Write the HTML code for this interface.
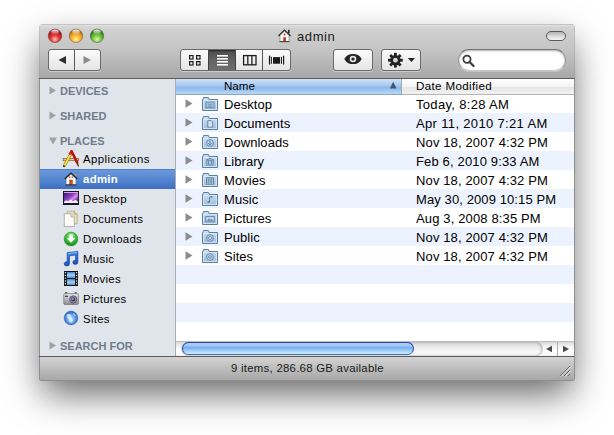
<!DOCTYPE html>
<html><head><meta charset="utf-8">
<style>
*{margin:0;padding:0;box-sizing:border-box}
html,body{width:614px;height:435px;overflow:hidden;background:#fff}
body{position:relative;font-family:"Liberation Sans",sans-serif;color:#000}
.a{position:absolute}
#win{position:absolute;left:39px;top:24px;width:536px;height:357px;border-radius:4px 4px 2px 2px;box-shadow:0 16px 36px -3px rgba(0,0,0,0.6);background:linear-gradient(#c4c4c4,#a2a2a2 54px,#909090 56px,#8e8e8e);overflow:hidden}
#tb{position:absolute;left:1px;top:0;width:534px;height:54px;background:linear-gradient(#dcdcdc,#d0d0d0 8%,#c5c5c5 45%,#a8a8a8);border-top:1px solid #c4c4c4;box-shadow:inset 0 1px 0 #e0e0e0}
#tbline{left:39px;top:78px;width:536px;height:1px;background:#5e5e5e}
.btn{position:absolute;border:1px solid #6a6a6a;border-radius:3px;background:linear-gradient(#fbfbfb,#f1f1f1 45%,#e5e5e5);box-shadow:0 1px 0 rgba(255,255,255,0.35)}
#side{left:40px;top:79px;width:135px;height:277px;background:#e0e5ec}
#vdiv{left:175px;top:79px;width:1px;height:277px;background:#acacac}
#list{left:176px;top:79px;width:398px;height:262px;background:#fff}
.hdr{font-size:11px;font-weight:bold;color:#717c89;letter-spacing:0}
.si{font-size:11.4px;letter-spacing:0.3px;color:#000}
.row{position:absolute;left:176px;width:398px;height:19px}
.alt{background:#edf3fe}
.nm{position:absolute;left:224px;font-size:13px;letter-spacing:0.05px}
.dt{position:absolute;left:416px;font-size:13px}
</style></head><body>
<div id="win">
  <div id="tb"></div>
</div>
<div class="a" id="tbline"></div>
<div class="a" id="side"></div>
<div class="a" id="vdiv"></div>
<div class="a" id="list"></div>
<svg width="0" height="0" style="position:absolute"><defs><linearGradient id="fg" x1="0" y1="0" x2="0" y2="1"><stop offset="0" stop-color="#cfe0f0"/><stop offset="1" stop-color="#a2bed8"/></linearGradient></defs></svg>
<!-- scrollbar -->
<div class="a" style="left:176px;top:341px;width:398px;height:15px;background:linear-gradient(#d8d8d8,#f2f2f2 30%,#ffffff 60%,#f4f4f4);border-top:1px solid #bdbdbd"></div>
<div class="a" style="left:181px;top:342px;width:362px;height:14px;border-radius:7px;background:linear-gradient(#cfcfcf,#ebebeb 35%,#f8f8f8 70%,#f0f0f0);box-shadow:inset -2px 0 2px rgba(0,0,0,0.18),inset 2px 0 2px rgba(0,0,0,0.15)"></div>
<div class="a" style="left:182px;top:342px;width:232px;height:13px;border-radius:7px;border:1px solid #2244c0;border-top-width:1.5px;border-bottom-color:#4a6a98;background:linear-gradient(#b0d0f4,#a2c6f2 25%,#7aaeec 42%,#92c4f6 62%,#b6e0fe 85%,#c6eaff)"></div>
<svg class="a" style="left:541px;top:342px" width="33" height="14" viewBox="0 0 33 14">
<path d="M5 7 L11 3.8 V10.2 Z" fill="#4a4a4a"/>
<line x1="16.5" y1="0" x2="16.5" y2="14" stroke="#b0b0b0" stroke-width="1"/>
<path d="M28 7 L22 3.8 V10.2 Z" fill="#4a4a4a"/>
</svg>
<!-- status bar -->
<div class="a" style="left:39px;top:356px;width:535px;height:1px;background:#5a5a5a"></div>
<div class="a" style="left:40px;top:357px;width:534px;height:23px;background:linear-gradient(#d4d4d4,#bdbdbd 50%,#a8a8a8)"></div>
<div class="a" style="left:231px;top:361px;font-size:11.4px;line-height:14px;letter-spacing:0.26px;color:#1a1a1a">9 items, 286.68 GB available</div>
<svg class="a" style="left:558px;top:364px" width="14" height="14" viewBox="0 0 14 14">
<g stroke="#6a6a6a" stroke-width="1"><line x1="2" y1="12" x2="12" y2="2"/><line x1="6" y1="12" x2="12" y2="6"/><line x1="10" y1="12" x2="12" y2="10"/></g>
<g stroke="#e8e8e8" stroke-width="1"><line x1="3" y1="12.5" x2="12.5" y2="3"/><line x1="7" y1="12.5" x2="12.5" y2="7"/></g>
</svg>

<!-- traffic lights -->
<svg class="a" style="left:46px;top:27px" width="60" height="18" viewBox="0 0 60 18">
<defs>
<radialGradient id="gr" cx="50%" cy="78%" r="62%"><stop offset="0" stop-color="#ffc0c0"/><stop offset="0.5" stop-color="#e83c3c"/><stop offset="0.85" stop-color="#c41e1e"/><stop offset="1" stop-color="#9c1414"/></radialGradient>
<radialGradient id="go" cx="50%" cy="78%" r="62%"><stop offset="0" stop-color="#fff4a0"/><stop offset="0.5" stop-color="#f8b838"/><stop offset="0.85" stop-color="#e49224"/><stop offset="1" stop-color="#b07014"/></radialGradient>
<radialGradient id="gg" cx="50%" cy="78%" r="62%"><stop offset="0" stop-color="#d8fcb0"/><stop offset="0.5" stop-color="#7cc848"/><stop offset="0.85" stop-color="#4a9c28"/><stop offset="1" stop-color="#2e7018"/></radialGradient>
<linearGradient id="hl" x1="0" y1="0" x2="0" y2="1"><stop offset="0" stop-color="#fff" stop-opacity="0.95"/><stop offset="1" stop-color="#fff" stop-opacity="0.05"/></linearGradient>
</defs>
<circle cx="9" cy="8.8" r="7.3" fill="#7a7a7a" opacity="0.3"/>
<circle cx="9" cy="8.8" r="6.6" fill="url(#gr)" stroke="#8a2222" stroke-width="0.6"/>
<ellipse cx="9" cy="5" rx="3.8" ry="2.5" fill="url(#hl)"/>
<circle cx="30" cy="8.8" r="7.3" fill="#7a7a7a" opacity="0.3"/>
<circle cx="30" cy="8.8" r="6.6" fill="url(#go)" stroke="#946020" stroke-width="0.6"/>
<ellipse cx="30" cy="5" rx="3.8" ry="2.5" fill="url(#hl)"/>
<circle cx="51" cy="8.8" r="7.3" fill="#7a7a7a" opacity="0.3"/>
<circle cx="51" cy="8.8" r="6.6" fill="url(#gg)" stroke="#3a7224" stroke-width="0.6"/>
<ellipse cx="51" cy="5" rx="3.8" ry="2.5" fill="url(#hl)"/>
</svg>
<!-- title -->
<svg class="a" style="left:277px;top:28px" width="15" height="15" viewBox="0 0 15 15">
<path d="M7.5 1.2 L1 7.6 L2 8.4 L7.5 3 L13 8.4 L14 7.6 Z" fill="#2a2a2a"/>
<rect x="11" y="1.8" width="1.6" height="3.5" fill="#2a2a2a"/>
<path d="M3 7.4 L7.5 3.2 L12 7.4 V13.6 H3 Z" fill="#fbfbf6" stroke="#666" stroke-width="0.5"/>
<rect x="6.3" y="9.2" width="2.6" height="4.4" fill="#c0361c"/>
<rect x="6.8" y="5.6" width="1.6" height="1.8" fill="#c0361c"/>
<rect x="2.5" y="13.2" width="10" height="0.9" fill="#333"/>
</svg>
<div class="a" style="left:297px;top:29px;font-size:13px;line-height:16px;letter-spacing:0.6px;color:#1a1a1a">admin</div>
<!-- pill -->
<div class="a" style="left:546px;top:31px;width:20px;height:10px;border-radius:5px;border:1px solid #5a5a5a;background:linear-gradient(#b4b4b4,#dcdcdc 55%,#f6f6f6)"></div>
<!-- back/forward -->
<div class="btn" style="left:48px;top:49px;width:53px;height:22px"></div>
<div class="a" style="left:74px;top:50px;width:1px;height:20px;background:#5a5a5a"></div>
<svg class="a" style="left:57px;top:55px" width="36" height="10" viewBox="0 0 36 10">
<path d="M1.5 5 L9 1 V9 Z" fill="#2e2e2e"/>
<path d="M34 5 L26.5 1 V9 Z" fill="#8c8c8c"/>
</svg>
<!-- segmented -->
<div class="btn" style="left:180px;top:49px;width:111px;height:22px"></div>
<div class="a" style="left:208px;top:50px;width:28px;height:20px;background:linear-gradient(#4e4e4e,#626262 50%,#6e6e6e);box-shadow:inset 0 1px 2px rgba(0,0,0,0.55)"></div>
<div class="a" style="left:208px;top:50px;width:1px;height:20px;background:#444"></div>
<div class="a" style="left:235px;top:50px;width:1px;height:20px;background:#444"></div>
<div class="a" style="left:262px;top:50px;width:1px;height:20px;background:#555"></div>
<svg class="a" style="left:187px;top:53px" width="100" height="14" viewBox="0 0 100 14">
<g fill="none" stroke="#1e1e1e" stroke-width="1.2">
<rect x="2.6" y="2.6" width="3.4" height="3.4"/><rect x="9.6" y="2.6" width="3.4" height="3.4"/>
<rect x="2.6" y="8.6" width="3.4" height="3.4"/><rect x="9.6" y="8.6" width="3.4" height="3.4"/>
</g>
<g fill="#fff"><rect x="30" y="2" width="11" height="1.6"/><rect x="30" y="5" width="11" height="1.6"/><rect x="30" y="8" width="11" height="1.6"/><rect x="30" y="11" width="11" height="1.6"/></g>
<g fill="none" stroke="#1e1e1e" stroke-width="1.3">
<rect x="56.6" y="2.6" width="12.4" height="9.2"/><line x1="60.8" y1="2.6" x2="60.8" y2="11.8"/><line x1="64.9" y1="2.6" x2="64.9" y2="11.8"/>
</g>
<g fill="#1a1a1a">
<rect x="86" y="4.1" width="7.1" height="6.6"/>
<rect x="81.9" y="2.7" width="1.3" height="8.8"/><rect x="84" y="3.8" width="0.9" height="6.9"/>
<rect x="94" y="3.8" width="1" height="6.9"/><rect x="96" y="2.7" width="1.2" height="8.8"/>
</g>
</svg>
<!-- quick look -->
<div class="btn" style="left:333px;top:49px;width:40px;height:22px"></div>
<svg class="a" style="left:342.4px;top:51.9px" width="22" height="14" viewBox="0 0 22 14">
<path d="M2.3 7 C5 2.4 8 1.9 11 1.9 C14 1.9 17 2.4 19.7 7 C17 11.6 14 12.1 11 12.1 C8 12.1 5 11.6 2.3 7 Z" fill="#242424"/>
<circle cx="11" cy="7" r="3.3" fill="#e4e4e4"/>
<circle cx="11" cy="7" r="1.6" fill="#242424"/>
</svg>
<!-- action -->
<div class="btn" style="left:381px;top:49px;width:40px;height:22px"></div>
<svg class="a" style="left:386px;top:52px" width="32" height="16" viewBox="0 0 32 16">
<g fill="#222">
<circle cx="9.4" cy="8.2" r="5.2"/>
<g>
<rect x="8" y="0.8" width="2.8" height="14.8"/>
<rect x="8" y="0.8" width="2.8" height="14.8" transform="rotate(45 9.4 8.2)"/>
<rect x="8" y="0.8" width="2.8" height="14.8" transform="rotate(90 9.4 8.2)"/>
<rect x="8" y="0.8" width="2.8" height="14.8" transform="rotate(135 9.4 8.2)"/>
</g>
</g>
<circle cx="9.4" cy="8.2" r="2.4" fill="#d4d4d4"/>
<path d="M21.8 6 H29 L25.4 10 Z" fill="#222"/>
</svg>
<!-- search -->
<div class="a" style="left:458px;top:49px;width:108px;height:22px;border-radius:11px;background:#fff;border:1px solid #979797;border-top-color:#727272;border-bottom-color:#c8c8c8;box-shadow:inset 0 1px 2px rgba(0,0,0,0.3),0 1px 0 rgba(255,255,255,0.25)"></div>
<svg class="a" style="left:461px;top:53px" width="16" height="15" viewBox="0 0 16 15">
<circle cx="6" cy="6.3" r="3.6" fill="none" stroke="#3a3a3a" stroke-width="1.8"/>
<line x1="8.6" y1="9" x2="12.6" y2="13" stroke="#3a3a3a" stroke-width="2.2" stroke-linecap="round"/>
</svg>

<!-- sidebar headers -->
<svg class="a" style="left:48px;top:85px" width="10" height="265" viewBox="0 0 10 265">
<g fill="#9aa2ad">
<path d="M1.5 1.5 L8 5.5 L1.5 9.5 Z"/>
<path d="M1.5 26.5 L8 30.5 L1.5 34.5 Z"/>
<path d="M1 52.5 H9 L5 59.5 Z"/>
<path d="M1.5 256.5 L8 260.5 L1.5 264.5 Z"/>
</g>
</svg>
<div class="a hdr" style="left:60px;top:85px">DEVICES</div>
<div class="a hdr" style="left:60px;top:110px">SHARED</div>
<div class="a hdr" style="left:60px;top:135px">PLACES</div>
<div class="a hdr" style="left:60px;top:340px">SEARCH FOR</div>
<!-- selection -->
<div class="a" style="left:40px;top:169px;width:135px;height:20px;background:linear-gradient(#6b98dc,#5486d0 50%,#3d6ec2);border-top:1px solid #4a7ed4"></div>
<!-- items -->
<div class="a si" style="left:83px;top:153px;letter-spacing:0.45px">Applications</div>
<div class="a si" style="left:83px;top:173px;color:#fff;font-weight:bold">admin</div>
<div class="a si" style="left:83px;top:193px">Desktop</div>
<div class="a si" style="left:83px;top:213px">Documents</div>
<div class="a si" style="left:83px;top:233px">Downloads</div>
<div class="a si" style="left:83px;top:253px">Music</div>
<div class="a si" style="left:83px;top:273px">Movies</div>
<div class="a si" style="left:83px;top:293px">Pictures</div>
<div class="a si" style="left:83px;top:313px">Sites</div>
<!-- icons -->
<svg class="a" style="left:62px;top:150px" width="18" height="18" viewBox="0 0 18 18">
<rect x="1.2" y="8.5" width="15.4" height="2.2" fill="#e6c58e" stroke="#8c5a2c" stroke-width="0.7"/>
<path d="M8.4 4.6 L2.4 15.6" stroke="#7a6a10" stroke-width="2.9" stroke-linecap="round"/>
<path d="M8.4 4.6 L2.6 15.2" stroke="#f4e038" stroke-width="2" stroke-linecap="round"/>
<path d="M8.1 3.6 L9.2 1.9" stroke="#e02828" stroke-width="2.8" stroke-linecap="round"/>
<path d="M2.3 15.4 L1.6 16.8" stroke="#3a2a10" stroke-width="1.6"/>
<path d="M9.6 1.2 L15.2 12.6" stroke="#b81414" stroke-width="2.6" stroke-linecap="round"/>
<path d="M14.8 12 L16.6 16.4" stroke="#7a2a18" stroke-width="1.4"/>
</svg>
<svg class="a" style="left:63px;top:171px" width="17" height="16" viewBox="0 0 17 16">
<rect x="12.2" y="1.2" width="1.6" height="4" fill="#cfcfcf" stroke="#555" stroke-width="0.4"/>
<path d="M3.4 7.6 L8 3.2 L12.6 7.6 V13.6 H3.4 Z" fill="#fbfaf0"/>
<path d="M8 1.2 L1.2 7.6 L2.1 8.5 L8 2.9 L13.9 8.5 L14.8 7.6 Z" fill="#2a2a2a"/>
<rect x="6.2" y="5.4" width="1.1" height="1.6" fill="#c83a1a"/><rect x="8.7" y="5.4" width="1.1" height="1.6" fill="#c83a1a"/>
<rect x="6.6" y="9" width="2.8" height="4.6" fill="#e04a10" stroke="#7a2a10" stroke-width="0.4"/>
<rect x="2.6" y="13.4" width="10.8" height="1.1" fill="#2a2a2a"/>
</svg>
<svg class="a" style="left:63px;top:191px" width="16" height="14" viewBox="0 0 16 14">
<defs><linearGradient id="dsk" x1="0" y1="0" x2="1" y2="1"><stop offset="0" stop-color="#2c1470"/><stop offset="0.45" stop-color="#9a48c8"/><stop offset="0.6" stop-color="#e090e8"/><stop offset="0.75" stop-color="#8a40b8"/><stop offset="1" stop-color="#301470"/></linearGradient></defs>
<rect x="0" y="0" width="16" height="14" fill="#1e1430"/>
<rect x="1" y="1" width="14" height="12" fill="url(#dsk)"/>
<rect x="1" y="1" width="14" height="1" fill="#d8a8e0"/>
<path d="M1 11 L3.2 9.2 L5 10.4 L7.6 8.6 L10 10.2 L12.4 8.8 L15 10.8 V12 H1 Z" fill="#f0f0ff"/>
<rect x="1" y="12" width="14" height="1" fill="#1e1430"/>
</svg>
<svg class="a" style="left:63px;top:210px" width="16" height="18" viewBox="0 0 16 18">
<path d="M4.3 1.2 H11.2 L14.2 4.2 V13.8 H4.3 Z" fill="#ece2b4" stroke="#a09670" stroke-width="0.6"/>
<path d="M11.2 1.2 V4.2 H14.2" fill="#d8cc98" stroke="#a09670" stroke-width="0.6"/>
<path d="M1.3 3.7 H8 L11.3 7 V16.5 H1.3 Z" fill="#fdfdfb" stroke="#8a8a8a" stroke-width="0.6"/>
<path d="M8 3.7 V7 H11.3" fill="#e4e4e4" stroke="#8a8a8a" stroke-width="0.6"/>
</svg>
<svg class="a" style="left:63px;top:231px" width="16" height="16" viewBox="0 0 16 16">
<defs><radialGradient id="dlg" cx="50%" cy="30%" r="70%"><stop offset="0" stop-color="#a8f090"/><stop offset="0.55" stop-color="#38b838"/><stop offset="1" stop-color="#1a8a1e"/></radialGradient></defs>
<circle cx="8" cy="8" r="6.9" fill="url(#dlg)" stroke="#208a22" stroke-width="0.5"/>
<path d="M6.1 3.4 H9.9 V7.2 H12.4 L8 11.8 L3.6 7.2 H6.1 Z" fill="#fff"/>
</svg>
<svg class="a" style="left:62px;top:250px" width="17" height="17" viewBox="0 0 17 17">
<defs><linearGradient id="mus" x1="0" y1="0" x2="0.3" y2="1"><stop offset="0" stop-color="#5aaaf4"/><stop offset="0.5" stop-color="#2a78dc"/><stop offset="1" stop-color="#1a50b8"/></linearGradient></defs>
<path d="M5.2 2.6 L15.8 1.4 V12.2 A2.5 2 0 1 1 13.6 10.4 V5 L7.4 5.8 V13.6 A2.6 2.1 0 1 1 5.2 11.8 Z" fill="url(#mus)" stroke="#1a3e9e" stroke-width="0.7"/>
<path d="M6.2 3.4 L15 2.4" stroke="#a8d4ff" stroke-width="0.8" opacity="0.8"/>
</svg>
<svg class="a" style="left:64px;top:271px" width="14" height="15" viewBox="0 0 14 15">
<defs><linearGradient id="sky" x1="0" y1="0" x2="0" y2="1"><stop offset="0" stop-color="#3a80d0"/><stop offset="0.5" stop-color="#a8d4f8"/><stop offset="1" stop-color="#4a90d8"/></linearGradient></defs>
<rect x="0" y="0" width="14" height="15" fill="#141414"/>
<rect x="3" y="1" width="8" height="6" fill="url(#sky)"/>
<rect x="3" y="8" width="8" height="6" fill="url(#sky)"/>
<g fill="#e8e8e8"><rect x="0.8" y="1" width="1.3" height="1.2"/><rect x="0.8" y="3.8" width="1.3" height="1.2"/><rect x="0.8" y="6.6" width="1.3" height="1.2"/><rect x="0.8" y="9.4" width="1.3" height="1.2"/><rect x="0.8" y="12.2" width="1.3" height="1.2"/>
<rect x="11.9" y="1" width="1.3" height="1.2"/><rect x="11.9" y="3.8" width="1.3" height="1.2"/><rect x="11.9" y="6.6" width="1.3" height="1.2"/><rect x="11.9" y="9.4" width="1.3" height="1.2"/><rect x="11.9" y="12.2" width="1.3" height="1.2"/></g>
</svg>
<svg class="a" style="left:63px;top:291px" width="16" height="15" viewBox="0 0 16 15">
<defs><linearGradient id="cam" x1="0" y1="0" x2="0" y2="1"><stop offset="0" stop-color="#e8e8ec"/><stop offset="1" stop-color="#8e8e96"/></linearGradient>
<radialGradient id="lens" cx="40%" cy="40%" r="60%"><stop offset="0" stop-color="#b8b0f0"/><stop offset="0.5" stop-color="#5a4aa0"/><stop offset="1" stop-color="#2a2040"/></radialGradient></defs>
<rect x="2" y="1.2" width="2.2" height="1.4" fill="#444"/><rect x="11.6" y="1.2" width="2.2" height="1.4" fill="#444"/>
<rect x="0.8" y="2.6" width="14.6" height="10.8" rx="1" fill="url(#cam)" stroke="#5a5a62" stroke-width="0.6"/>
<circle cx="10.2" cy="8.4" r="3.6" fill="#9a9aa4" stroke="#3a3a44" stroke-width="0.7"/>
<circle cx="10.2" cy="8.4" r="2.1" fill="url(#lens)"/>
<rect x="2.2" y="4.6" width="2.6" height="1.4" fill="#3a3a3a"/>
</svg>
<svg class="a" style="left:63px;top:310px" width="16" height="16" viewBox="0 0 16 16">
<defs><radialGradient id="glb" cx="50%" cy="55%" r="60%"><stop offset="0" stop-color="#d8f0ff"/><stop offset="0.5" stop-color="#5aa0ea"/><stop offset="1" stop-color="#1c54b8"/></radialGradient></defs>
<circle cx="8" cy="8" r="6.9" fill="url(#glb)" stroke="#2a5aa8" stroke-width="0.4"/>
<path d="M3.6 4.6 Q6.6 3.4 8.4 5.2 Q7 7.4 9.4 9 Q10.8 10.4 9 12.6 Q6.4 12.8 5.6 10.4 Q6.4 8.4 4 7.8 Z" fill="#e8f6ff" opacity="0.75"/>
<path d="M10 3 Q12.4 3.6 13 6 Q11.6 6.4 10.6 5 Z" fill="#e8f6ff" opacity="0.6"/>
</svg>

<!-- header -->
<div class="a" style="left:176px;top:79px;width:226px;height:16px;background:linear-gradient(#cfe2f8,#a6c8ef 45%,#8db8ea 55%,#b7d8f8);border-bottom:1px solid #8aa6c6"></div>
<div class="a" style="left:402px;top:79px;width:172px;height:16px;background:linear-gradient(#ffffff,#f4f4f4 50%,#e6e6e6 55%,#f2f2f2);border-bottom:1px solid #b4b4b4"></div>
<div class="a" style="left:401px;top:79px;width:1px;height:15px;background:#9ab"></div>
<div class="a" style="left:224px;top:79px;font-size:11.6px;line-height:13px;letter-spacing:0px">Name</div>
<svg class="a" style="left:388px;top:80px" width="10" height="10" viewBox="0 0 10 10"><path d="M1.8 8.6 L5.2 1.8 L8.6 8.6 Z" fill="#3e566e"/></svg>
<div class="a" style="left:416px;top:79px;font-size:11.6px;line-height:13px;letter-spacing:0.35px">Date Modified</div>
<!-- rows -->
<div class="row" style="top:95px;height:18px"></div>
<div class="row alt" style="top:113px"></div>
<div class="row alt" style="top:151px"></div>
<div class="row alt" style="top:189px"></div>
<div class="row alt" style="top:227px"></div>
<div class="row alt" style="top:265px"></div>
<div class="row alt" style="top:303px"></div>

<svg class="a" style="left:184px;top:98px" width="10" height="11" viewBox="0 0 10 11"><path d="M1.5 1.2 L8.5 5.5 L1.5 9.8 Z" fill="#8c8c8c"/></svg>
<div class="nm" style="top:97px">Desktop</div>
<div class="dt" style="top:97px;letter-spacing:0.32px">Today, 8:28 AM</div>
<svg class="a" style="left:184px;top:117px" width="10" height="11" viewBox="0 0 10 11"><path d="M1.5 1.2 L8.5 5.5 L1.5 9.8 Z" fill="#8c8c8c"/></svg>
<div class="nm" style="top:116px">Documents</div>
<div class="dt" style="top:116px;letter-spacing:0.34px">Apr 11, 2010 7:21 AM</div>
<svg class="a" style="left:184px;top:136px" width="10" height="11" viewBox="0 0 10 11"><path d="M1.5 1.2 L8.5 5.5 L1.5 9.8 Z" fill="#8c8c8c"/></svg>
<div class="nm" style="top:135px">Downloads</div>
<div class="dt" style="top:135px;letter-spacing:0.13px">Nov 18, 2007 4:32 PM</div>
<svg class="a" style="left:184px;top:155px" width="10" height="11" viewBox="0 0 10 11"><path d="M1.5 1.2 L8.5 5.5 L1.5 9.8 Z" fill="#8c8c8c"/></svg>
<div class="nm" style="top:154px">Library</div>
<div class="dt" style="top:154px;letter-spacing:0.15px">Feb 6, 2010 9:33 AM</div>
<svg class="a" style="left:184px;top:174px" width="10" height="11" viewBox="0 0 10 11"><path d="M1.5 1.2 L8.5 5.5 L1.5 9.8 Z" fill="#8c8c8c"/></svg>
<div class="nm" style="top:173px">Movies</div>
<div class="dt" style="top:173px;letter-spacing:0.13px">Nov 18, 2007 4:32 PM</div>
<svg class="a" style="left:184px;top:193px" width="10" height="11" viewBox="0 0 10 11"><path d="M1.5 1.2 L8.5 5.5 L1.5 9.8 Z" fill="#8c8c8c"/></svg>
<div class="nm" style="top:192px">Music</div>
<div class="dt" style="top:192px;letter-spacing:0.1px">May 30, 2009 10:15 PM</div>
<svg class="a" style="left:184px;top:212px" width="10" height="11" viewBox="0 0 10 11"><path d="M1.5 1.2 L8.5 5.5 L1.5 9.8 Z" fill="#8c8c8c"/></svg>
<div class="nm" style="top:211px">Pictures</div>
<div class="dt" style="top:211px;letter-spacing:0.14px">Aug 3, 2008 8:35 PM</div>
<svg class="a" style="left:184px;top:231px" width="10" height="11" viewBox="0 0 10 11"><path d="M1.5 1.2 L8.5 5.5 L1.5 9.8 Z" fill="#8c8c8c"/></svg>
<div class="nm" style="top:230px">Public</div>
<div class="dt" style="top:230px;letter-spacing:0.13px">Nov 18, 2007 4:32 PM</div>
<svg class="a" style="left:184px;top:250px" width="10" height="11" viewBox="0 0 10 11"><path d="M1.5 1.2 L8.5 5.5 L1.5 9.8 Z" fill="#8c8c8c"/></svg>
<div class="nm" style="top:249px">Sites</div>
<div class="dt" style="top:249px;letter-spacing:0.13px">Nov 18, 2007 4:32 PM</div>
<svg class="a fold" style="left:201px;top:96px" width="18" height="16" viewBox="0 0 18 16"><path d="M1.5 3.5 H2 L2.5 1.5 H7.5 L8 3.5 H16.5 V14.5 H1.5 Z" fill="url(#fg)" stroke="#5a80a8" stroke-width="1"/><path d="M2.5 4.5 H15.5 V13.5 H2.5 Z" fill="none" stroke="#e2eef8" stroke-width="0.8" opacity="0.9"/><rect x="5" y="6" width="8" height="5.8" fill="#bcd2e6" stroke="#5a80a8" stroke-width="0.9"/><rect x="6.5" y="7.6" width="5" height="1" fill="#5a80a8"/><rect x="6.5" y="9.6" width="5" height="1" fill="#5a80a8"/></svg>
<svg class="a fold" style="left:201px;top:115px" width="18" height="16" viewBox="0 0 18 16"><path d="M1.5 3.5 H2 L2.5 1.5 H7.5 L8 3.5 H16.5 V14.5 H1.5 Z" fill="url(#fg)" stroke="#5a80a8" stroke-width="1"/><path d="M2.5 4.5 H15.5 V13.5 H2.5 Z" fill="none" stroke="#e2eef8" stroke-width="0.8" opacity="0.9"/><path d="M6.8 5.6 H10.2 L11.6 7 V12.2 H6.8 Z" fill="#d4e4f2" stroke="#5a80a8" stroke-width="0.9"/></svg>
<svg class="a fold" style="left:201px;top:134px" width="18" height="16" viewBox="0 0 18 16"><path d="M1.5 3.5 H2 L2.5 1.5 H7.5 L8 3.5 H16.5 V14.5 H1.5 Z" fill="url(#fg)" stroke="#5a80a8" stroke-width="1"/><path d="M2.5 4.5 H15.5 V13.5 H2.5 Z" fill="none" stroke="#e2eef8" stroke-width="0.8" opacity="0.9"/><circle cx="9" cy="9" r="3.4" fill="#c4d8ea" stroke="#5a80a8" stroke-width="0.9"/><path d="M9 6.6 V11 M7.2 9.2 L9 11 L10.8 9.2" fill="none" stroke="#5a80a8" stroke-width="1"/></svg>
<svg class="a fold" style="left:201px;top:153px" width="18" height="16" viewBox="0 0 18 16"><path d="M1.5 3.5 H2 L2.5 1.5 H7.5 L8 3.5 H16.5 V14.5 H1.5 Z" fill="url(#fg)" stroke="#5a80a8" stroke-width="1"/><path d="M2.5 4.5 H15.5 V13.5 H2.5 Z" fill="none" stroke="#e2eef8" stroke-width="0.8" opacity="0.9"/><path d="M5.2 12 H12.8 M5.8 11 V7.6 M7.6 11 V7.6 M10.4 11 V7.6 M12.2 11 V7.6 M5 7.2 L9 5.2 L13 7.2 Z" fill="none" stroke="#5a80a8" stroke-width="0.9"/></svg>
<svg class="a fold" style="left:201px;top:172px" width="18" height="16" viewBox="0 0 18 16"><path d="M1.5 3.5 H2 L2.5 1.5 H7.5 L8 3.5 H16.5 V14.5 H1.5 Z" fill="url(#fg)" stroke="#5a80a8" stroke-width="1"/><path d="M2.5 4.5 H15.5 V13.5 H2.5 Z" fill="none" stroke="#e2eef8" stroke-width="0.8" opacity="0.9"/><rect x="5.5" y="5.8" width="7" height="6.4" fill="#c4d8ea" stroke="#5a80a8" stroke-width="0.9"/><path d="M7.8 5.8 V12.2 M10.2 5.8 V12.2 M5.5 8 H12.5 M5.5 10 H12.5" stroke="#5a80a8" stroke-width="0.7"/></svg>
<svg class="a fold" style="left:201px;top:191px" width="18" height="16" viewBox="0 0 18 16"><path d="M1.5 3.5 H2 L2.5 1.5 H7.5 L8 3.5 H16.5 V14.5 H1.5 Z" fill="url(#fg)" stroke="#5a80a8" stroke-width="1"/><path d="M2.5 4.5 H15.5 V13.5 H2.5 Z" fill="none" stroke="#e2eef8" stroke-width="0.8" opacity="0.9"/><path d="M8.6 11 V6 L11 5.4 V7" fill="none" stroke="#5a80a8" stroke-width="1"/><ellipse cx="7.6" cy="11" rx="1.3" ry="1" fill="#5a80a8"/></svg>
<svg class="a fold" style="left:201px;top:210px" width="18" height="16" viewBox="0 0 18 16"><path d="M1.5 3.5 H2 L2.5 1.5 H7.5 L8 3.5 H16.5 V14.5 H1.5 Z" fill="url(#fg)" stroke="#5a80a8" stroke-width="1"/><path d="M2.5 4.5 H15.5 V13.5 H2.5 Z" fill="none" stroke="#e2eef8" stroke-width="0.8" opacity="0.9"/><rect x="4.8" y="6.4" width="8.4" height="5.4" fill="#c4d8ea" stroke="#5a80a8" stroke-width="0.9"/><path d="M6 10.8 L8 8.6 L9.6 10 L10.8 9 L12.2 10.8 Z" fill="#5a80a8"/></svg>
<svg class="a fold" style="left:201px;top:229px" width="18" height="16" viewBox="0 0 18 16"><path d="M1.5 3.5 H2 L2.5 1.5 H7.5 L8 3.5 H16.5 V14.5 H1.5 Z" fill="url(#fg)" stroke="#5a80a8" stroke-width="1"/><path d="M2.5 4.5 H15.5 V13.5 H2.5 Z" fill="none" stroke="#e2eef8" stroke-width="0.8" opacity="0.9"/><circle cx="9" cy="9" r="3.4" fill="#c4d8ea" stroke="#5a80a8" stroke-width="0.9"/><path d="M9 6.8 L11.2 9 L9 11.2 L6.8 9 Z" fill="none" stroke="#5a80a8" stroke-width="0.9"/></svg>
<svg class="a fold" style="left:201px;top:248px" width="18" height="16" viewBox="0 0 18 16"><path d="M1.5 3.5 H2 L2.5 1.5 H7.5 L8 3.5 H16.5 V14.5 H1.5 Z" fill="url(#fg)" stroke="#5a80a8" stroke-width="1"/><path d="M2.5 4.5 H15.5 V13.5 H2.5 Z" fill="none" stroke="#e2eef8" stroke-width="0.8" opacity="0.9"/><circle cx="9" cy="9" r="3.4" fill="#c4d8ea" stroke="#5a80a8" stroke-width="0.9"/><circle cx="9" cy="9" r="1.4" fill="none" stroke="#5a80a8" stroke-width="0.8"/></svg>
</body></html>
